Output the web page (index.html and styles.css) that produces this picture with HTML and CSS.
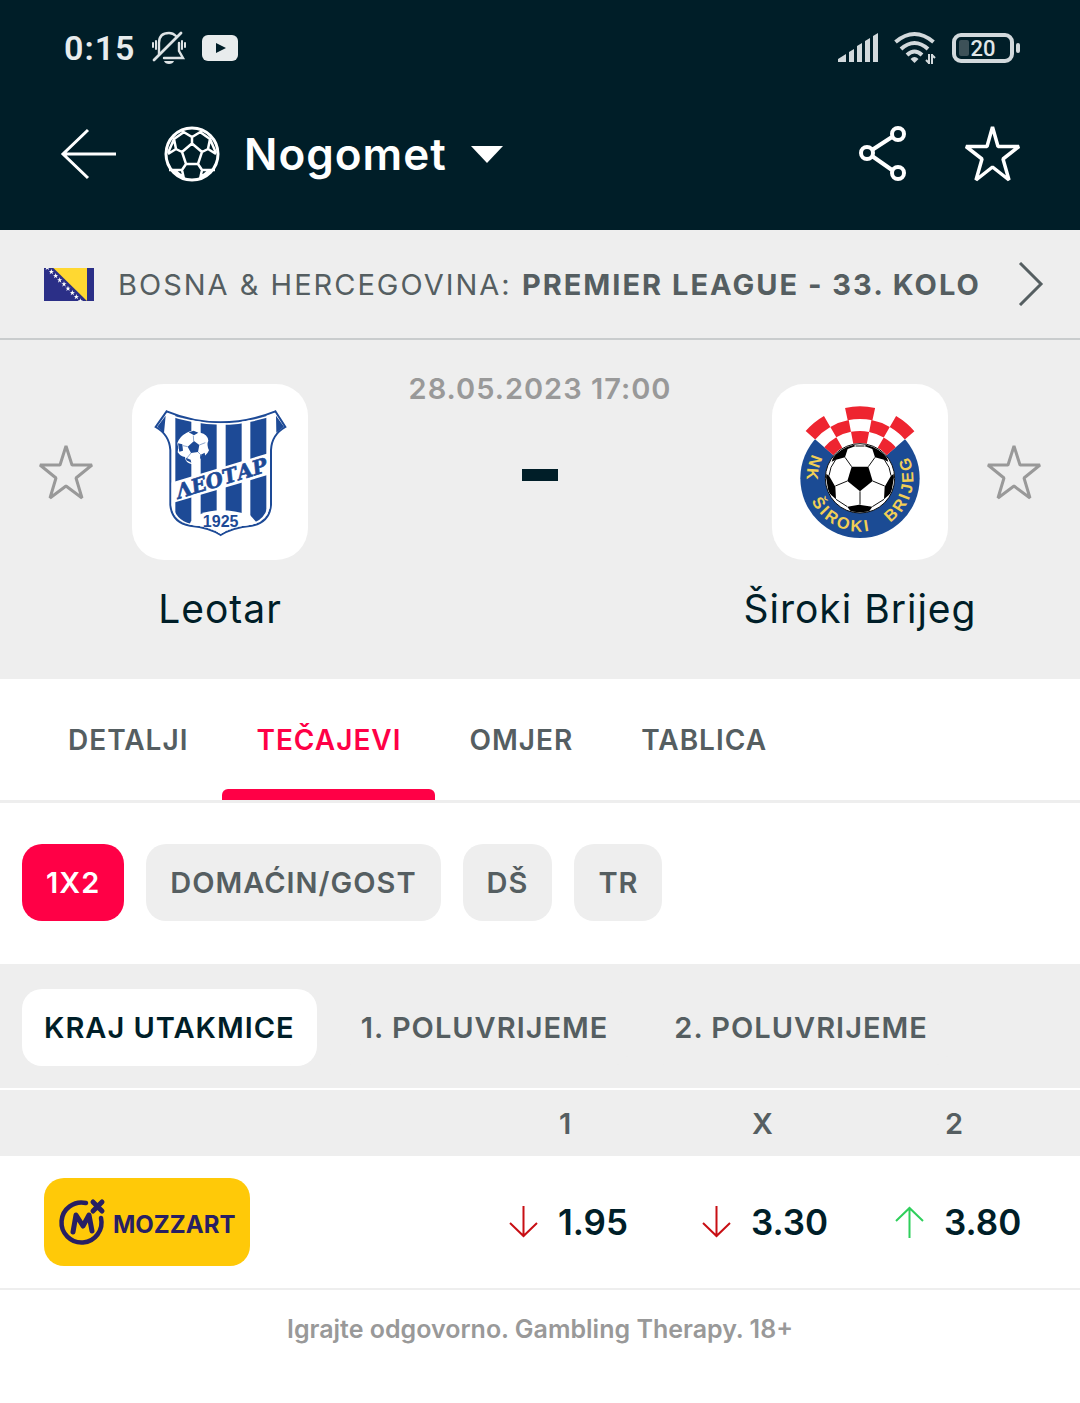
FILE: index.html
```html
<!DOCTYPE html>
<html lang="hr">
<head>
<meta charset="utf-8">
<meta name="viewport" content="width=device-width, initial-scale=1">
<title>Leotar - Široki Brijeg</title>
<link rel="stylesheet" href="styles.css">
</head>
<body>
<header class="top">
  <div class="status">
    <div class="status-group">
      <span class="clock">0:15</span>
      <svg width="34" height="34" viewBox="0 0 34 34" fill="none" stroke="#dde3e5" stroke-width="2" stroke-linecap="round" aria-hidden="true">
        <path d="M7 23V12C7 5 11 2 17 2c3 0 5 1 7 3M27 12v8l4 7H12" stroke-width="2.4"/>
        <path d="M2 29 29 2" stroke-width="2.8"/>
        <path d="M1 12v4M4 10v8M30 10v8M33 12v4"/>
        <path d="M12 30h10c-1 4-9 4-10 0z" fill="#dde3e5" stroke="none"/>
      </svg>
      <svg width="36" height="26" viewBox="0 0 36 26" aria-hidden="true"><rect width="36" height="26" rx="6" fill="#e8eced"/><path d="M14 8v10l10-5z" fill="#001e28"/></svg>
    </div>
    <div class="status-group">
      <svg width="40" height="30" viewBox="0 0 40 30" fill="#d2d9dc" aria-hidden="true"><path d="M0 29v-3l8-5v8zM11 29V19l5-3v13zM19 29V13l5-3v19zM27 29V8l5-3v24zM35 29V3l5-3v29z"/></svg>
      <svg width="42" height="34" viewBox="0 0 42 34" fill="none" stroke="#d2d9dc" stroke-width="4" aria-hidden="true">
        <path d="M1.500 11q19-16 38 0M7 18q13.500-12 27 0M13 24q7.500-7 15 0"/>
        <path d="m16.500 28q4-4 8 0l-4 4z" fill="#d2d9dc" stroke="none"/>
        <path d="M35 23v10M38 23v10M35 32l-3-3M38 24l3 3" stroke-width="2"/>
      </svg>
      <svg width="68" height="30" viewBox="0 0 68 30" aria-hidden="true">
        <rect x="2" y="2" width="58" height="26" rx="7" fill="none" stroke="#d2d9dc" stroke-width="4"/>
        <rect x="7" y="7" width="10" height="16" rx="2" fill="#3d5158"/>
        <rect x="64" y="10" width="4" height="10" rx="2" fill="#d2d9dc"/>
        <text class="battery" x="31" y="23" text-anchor="middle">20</text>
      </svg>
    </div>
  </div>
  <div class="bar">
    <button class="icon-button" aria-label="Natrag">
      <svg width="56" height="56" viewBox="0 0 56 56" fill="none" stroke="#fff" stroke-width="3"><path d="M56 28H3M28 4 3 28l25 24"/></svg>
    </button>
    <button class="sport">
      <svg width="56" height="56" viewBox="0 0 56 56" fill="none" stroke="#fff" stroke-width="2.500" aria-hidden="true">
        <circle cx="28" cy="28" r="26" stroke-width="3"/>
        <path d="M28 17.500 38 26 34 38H22L18 26zM28 17.500V11M18 5l10 6 10-6M38 26l6-3M18 26l-6-3M34 38l4 6M22 38l-4 6M20 6l-10 7 2 10-8 5M36 6l10 7-2 10 8 5M10 13 4 27M46 13l6 14M5 44h13l2 9M51 44H38l-2 9M10 44l9 7M46 44l-9 7"/>
      </svg>
      <span>Nogomet</span>
      <svg width="32" height="17" viewBox="0 0 32 17" aria-hidden="true"><path d="M0 0h32L16 17z" fill="#fff"/></svg>
    </button>
    <span class="spacer"></span>
    <button class="icon-button" aria-label="Podijeli">
      <svg width="50" height="56" viewBox="0 0 50 56" fill="none" stroke="#fff" stroke-width="4"><circle cx="9" cy="27" r="6"/><circle cx="40" cy="8" r="6"/><circle cx="40" cy="47" r="6"/><path d="m14 24 20-13M14 30l20 14"/></svg>
    </button>
    <button class="icon-button" aria-label="Dodaj u favorite">
      <svg width="56" height="56" viewBox="0 0 56 56" fill="none" stroke="#fff" stroke-width="3.500" stroke-linejoin="bevel"><path d="M28.500 1 34 20.500H55L39 33 45 54 28.500 41 12 54 18 33 2 20.500H23z"/></svg>
    </button>
  </div>
</header>

<main>
  <a class="league" href="#liga">
    <svg width="50" height="33" viewBox="0 0 150 99" aria-hidden="true">
      <rect width="150" height="99" fill="#2b2f87"/>
      <path d="M28 0h101v99z" fill="#ffd831"/>
      <defs><path id="fs" d="m0-8 2 6h6L3 1l2 7-5-4-5 4 2-7-5-3h6z" fill="#fff"/></defs>
      <use href="#fs" x="10" y="-2"/><use href="#fs" x="22" y="11"/><use href="#fs" x="35" y="23"/><use href="#fs" x="47" y="36"/><use href="#fs" x="60" y="48"/><use href="#fs" x="72" y="61"/><use href="#fs" x="85" y="74"/><use href="#fs" x="97" y="86"/><use href="#fs" x="109" y="99"/>
    </svg>
    <span class="league-name">BOSNA &amp; HERCEGOVINA: <b>PREMIER LEAGUE - 33. KOLO</b></span>
    <svg width="26" height="44" viewBox="0 0 26 44" fill="none" stroke="#555e61" stroke-width="3" aria-hidden="true"><path d="m2 1 21 21L2 43"/></svg>
  </a>

  <section class="match">
    <div class="team">
      <button class="icon-button" aria-label="Prati Leotar">
        <svg width="56" height="56" viewBox="0 0 56 56" fill="none" stroke="#999" stroke-width="3" stroke-linejoin="bevel"><path d="M28 2 34 21H54L38 34 44 54 28 42 12 54 18 34 2 21H22z"/></svg>
      </button>
      <svg class="crest" viewBox="36 42 528 528" aria-label="Leotar">
        <defs><clipPath id="shield"><path d="M142 127Q220 158 302 158T463 127L492 171Q452 194 450 240V405Q445 455 395 464 335 470 302 491 270 470 210 464 160 455 155 405V240Q150 194 110 171z"/></clipPath></defs>
        <path d="M140 124Q220 157 302 157T466 124L496 171Q455 194 453 240V405Q448 458 395 467 335 473 302 495 270 473 210 467 156 458 151 405V240Q148 194 107 171z" fill="#fff" stroke="#1d4a96" stroke-width="6"/>
        <g clip-path="url(#shield)">
          <path d="M166 120h48v400h-48zM242 120h48v400h-48zM317 120h48v400h-48zM391 120h48v400h-48z" fill="#1d4a96"/>
          <path d="M130 130Q220 162 302 162T474 130" fill="none" stroke="#fff" stroke-width="5"/>
          <path d="M150 339 460 245V310L150 401z" fill="#fff"/>
          <path d="M195 500 212 455 242 432Q300 408 390 435L412 460 420 500z" fill="#fff"/>
          <path d="M153 400Q160 460 225 468L302 492 380 468Q442 460 449 400" fill="none" stroke="#fff" stroke-width="9"/>
        </g>
        <path d="m137 137-25 33 20 18zM468 137l24 33-23 18z" fill="#1d4a96"/>
        <path d="M200 188q20-11 41 0 22 4 24 24-6 12 2 29-8 20-31 24-5 17-20 18-20-4-21-22-14-2-22-14 4-12-1-28 7-20 28-31z" fill="#fff"/>
        <path d="m222 213 16 12-4 21-21 3-10-19zM174 220l13 3 2 19-11 3zM206 187l15-5 14 6-13 8zM241 255l13-7 2 12-16 6zM198 263l14 6 2 9-15-7z" fill="#1d4a96"/>
        <path d="m221 213-1-16M238 225l18-7M234 246l10 10M213 249l-12 15M203 230l-14-3" stroke="#8fa8cf" stroke-width="3"/>
        <text class="crest-name" x="176" y="386" transform="rotate(-17 176 386)">ΛЕОТАР</text>
        <text class="crest-year" x="302" y="471" text-anchor="middle">1925</text>
      </svg>
      <span></span>
      <h2>Leotar</h2>
    </div>

    <div class="result">
      <time datetime="2023-05-28T17:00">28.05.2023 17:00</time>
      <span class="dash" role="img" aria-label="Bez rezultata"></span>
    </div>

    <div class="team">
      <span></span>
      <svg class="crest" viewBox="36 42 528 528" aria-label="Široki Brijeg">
        <defs>
          <path id="ring" d="M177.400 222.200A160 160 0 1 0 422.600 222.200"/>
          <clipPath id="ball"><circle cx="300" cy="325" r="102"/></clipPath>
        </defs>
        <circle cx="300" cy="325" r="179" fill="#1b4b94"/>
        <g fill="none" transform="rotate(-139 300 325)">
          <circle cx="300" cy="325" r="142" stroke="#fff" stroke-width="80" pathLength="360" stroke-dasharray="98 262"/>
          <circle cx="300" cy="325" r="197" stroke="#ee2530" stroke-width="38" pathLength="360" stroke-dasharray="19 18 24 18 19 262"/>
          <circle cx="300" cy="325" r="160" stroke="#ee2530" stroke-width="36" pathLength="360" stroke-dasharray="0 19 19 22 19 281"/>
          <circle cx="300" cy="325" r="124" stroke="#ee2530" stroke-width="36" pathLength="360" stroke-dasharray="19 19 22 19 19 262"/>
        </g>
        <circle cx="300" cy="325" r="104" fill="#fff" stroke="#111" stroke-width="3"/>
        <g clip-path="url(#ball)">
          <path d="M275 290h50l13 43-38 31-38-31z"/>
          <path d="M215 275l12-35 40-22 20 10-24 9-8 25-27 7zM385 275l-12-35-40-22-20 10 24 9 8 25 27 7zM196 310l11 7 19 33 2 38-22-20zM404 310l-11 7-19 33-2 38 22-20zM262 410l35 -6 40 6-15 22h-45z"/>
          <path d="M275 290l-20-28M325 290l20-28M262 333l-36 15M338 333l36 15M300 364v40M228 388l34 22M372 388l-35 22M207 317q2-26 20-48M393 317q-2-26-20-48M287 228h26" fill="none" stroke="#111" stroke-width="3"/>
        </g>
        <text class="crest-ring" text-anchor="middle"><textPath href="#ring" startOffset="11%">NK</textPath></text>
        <text class="crest-ring" text-anchor="middle"><textPath href="#ring" startOffset="40%">ŠIROKI</textPath></text>
        <text class="crest-ring" text-anchor="middle"><textPath href="#ring" startOffset="79%">BRIJEG</textPath></text>
      </svg>
      <button class="icon-button" aria-label="Prati Široki Brijeg">
        <svg width="56" height="56" viewBox="0 0 56 56" fill="none" stroke="#999" stroke-width="3" stroke-linejoin="bevel"><path d="M28 2 34 21H54L38 34 44 54 28 42 12 54 18 34 2 21H22z"/></svg>
      </button>
      <h2>Široki Brijeg</h2>
    </div>
  </section>

  <nav class="tabs">
    <a href="#detalji">DETALJI</a>
    <a class="active" href="#tecajevi" aria-current="page">TEČAJEVI</a>
    <a href="#omjer">OMJER</a>
    <a href="#tablica">TABLICA</a>
  </nav>

  <div class="chips">
    <button class="chip active">1X2</button>
    <button class="chip">DOMAĆIN/GOST</button>
    <button class="chip">DŠ</button>
    <button class="chip">TR</button>
  </div>

  <div class="chips periods">
    <button class="chip active">KRAJ UTAKMICE</button>
    <button class="chip">1. POLUVRIJEME</button>
    <button class="chip">2. POLUVRIJEME</button>
  </div>

  <table class="odds">
    <thead>
      <tr><td></td><th scope="col">1</th><th scope="col">X</th><th scope="col">2</th></tr>
    </thead>
    <tbody>
      <tr>
        <td class="bookmaker">
          <a href="#mozzart" aria-label="Mozzart">
            <svg width="206" height="88" viewBox="0 0 206 88" fill="none" stroke="#281f63">
              <path d="M42 25A20 20 0 1 0 57 40" stroke-width="4.500" stroke-linecap="round"/>
              <path d="m49 24 9 9M58 24l-9 9" stroke-width="5" stroke-linecap="round"/>
              <path d="M29 54l3-17 7 11 6-11 3 16" stroke-width="5" stroke-linecap="round" stroke-linejoin="round"/>
              <text class="brand" x="69" y="55">MOZZART</text>
            </svg>
          </a>
        </td>
        <td><div class="odd"><svg class="down" width="29" height="32" viewBox="0 0 29 32" aria-label="pad"><path d="M14.500 0v30M1 17l13.500 13L28 17"/></svg>1.95</div></td>
        <td><div class="odd"><svg class="down" width="29" height="32" viewBox="0 0 29 32" aria-label="pad"><path d="M14.500 0v30M1 17l13.500 13L28 17"/></svg>3.30</div></td>
        <td><div class="odd"><svg class="up" width="29" height="32" viewBox="0 0 29 32" aria-label="rast"><path d="M14.500 32V2M1 15 14.500 2 28 15"/></svg>3.80</div></td>
      </tr>
    </tbody>
  </table>
</main>
<footer>Igrajte odgovorno. Gambling Therapy. 18+</footer>
</body>
</html>
```
FILE: styles.css
```css
* { box-sizing: border-box; }

body {
  margin: 0;
  background: #fff;
  color: #555e61;
  font-family: Inter, "Liberation Sans", sans-serif;
  font-size: 29px;
  font-weight: 600;
}

button {
  border: 0;
  padding: 0;
  background: none;
  color: inherit;
  font: inherit;
  letter-spacing: inherit;
}

a { color: inherit; text-decoration: none; }
svg { display: block; flex: none; }

.top { background: #001e28; color: #fff; }

.status {
  display: flex;
  justify-content: space-between;
  align-items: center;
  height: 96px;
  padding: 0 60px 0 64px;
}

.status-group { display: flex; align-items: center; gap: 16px; }

.clock {
  color: #e8eced;
  font: 600 34px/40px Roboto, sans-serif;
  letter-spacing: 1px;
}

.battery { fill: #e0e6e8; font: 500 22px Roboto, sans-serif; }

.bar {
  display: flex;
  align-items: center;
  height: 134px;
  padding: 0 60px 18px;
}

.sport {
  display: flex;
  align-items: center;
  gap: 24px;
  margin-left: 48px;
  font-size: 44px;
  line-height: 56px;
  letter-spacing: 1px;
}

.spacer { flex: 1; }
.spacer ~ .icon-button { margin-left: 56px; }

.league {
  display: flex;
  align-items: center;
  gap: 24px;
  height: 110px;
  padding: 0 36px 0 44px;
  border-bottom: 2px solid #c9cccd;
  background: #eee;
}

.league-name {
  flex: 1;
  font-weight: 400;
  letter-spacing: 2px;
  white-space: nowrap;
}

.league-name b { font-weight: 700; }

.match {
  display: grid;
  grid-template-columns: minmax(0, 11fr) minmax(0, 5fr) minmax(0, 11fr);
  padding: 44px 0 45px;
  background: #eee;
}

.team {
  display: grid;
  grid-template-columns: 1fr 176px 1fr;
  place-items: center;
}

.crest {
  width: 176px;
  height: 176px;
  border-radius: 32px;
  background: #fff;
}

.crest-name { fill: #1d4a96; stroke: #1d4a96; stroke-width: 2; font: italic bold 60px "DejaVu Serif", serif; }
.crest-year { fill: #1d4a96; font: bold 48px "Liberation Sans", sans-serif; }
.crest-ring { fill: #f2cf55; font: bold 49px "Liberation Sans", sans-serif; letter-spacing: 8px; }

.team h2 {
  grid-column: 1 / -1;
  margin: 24px 0 0;
  color: #001e28;
  font-size: 39px;
  font-weight: 400;
  line-height: 50px;
  letter-spacing: 1px;
}

.result {
  display: flex;
  flex-direction: column;
  align-items: center;
  color: #999;
}

.result time {
  margin-top: -14px;
  line-height: 38px;
  letter-spacing: 1px;
  white-space: nowrap;
}

.dash {
  width: 36px;
  height: 12px;
  margin-top: 61px;
  background: #001e28;
}

.tabs {
  display: flex;
  height: 124px;
  padding: 0 34px;
  border-bottom: 3px solid #eee;
  font-size: 28px;
  letter-spacing: 1px;
}

.tabs a {
  display: grid;
  grid-template-rows: 110px 11px;
  padding: 0 34px;
  line-height: 122px;
}

.tabs .active { color: #ff0046; }

.tabs .active::after {
  content: "";
  grid-row: 2;
  margin: 0 -34px;
  border-radius: 6px 6px 0 0;
  background: #ff0046;
}

.chips {
  display: flex;
  gap: 22px;
  padding: 41px 22px 43px;
  letter-spacing: 1px;
}

.chip {
  height: 77px;
  padding: 0 24px;
  border-radius: 20px;
  background: #eee;
  white-space: nowrap;
}

.chip.active { background: #ff0046; color: #fff; }

.periods {
  padding: 25px 22px 22px;
  border-bottom: 2px solid #fff;
  background: #eee;
}

.periods .chip { padding: 0 22px; }
.periods .chip.active { background: #fff; color: #001e28; }

.odds {
  width: 100%;
  border-collapse: collapse;
  table-layout: fixed;
}

.odds th {
  width: 193px;
  height: 66px;
  padding: 0 0 0 58px;
  font-weight: 600;
  text-align: left;
}

.odds thead { background: #eee; }
.odds td { padding: 0; }
.odds tbody td { height: 133px; border-bottom: 2px solid #eee; }
.odds .bookmaker { padding-left: 44px; }

.bookmaker a {
  display: block;
  width: 206px;
  border-radius: 20px;
  background: #ffc908;
}

.brand { fill: #281f63; stroke: none; font: 700 24px Inter, sans-serif; }

.odd {
  display: flex;
  align-items: center;
  gap: 20px;
  padding-left: 8px;
  color: #001e28;
  font-size: 35px;
}

.odd svg { fill: none; stroke-width: 2; }
.down { stroke: #c80f14; }
.up { stroke: #2fcf5c; }

footer {
  padding: 22px;
  color: #999;
  font-size: 25px;
  line-height: 34px;
  text-align: center;
}
```
